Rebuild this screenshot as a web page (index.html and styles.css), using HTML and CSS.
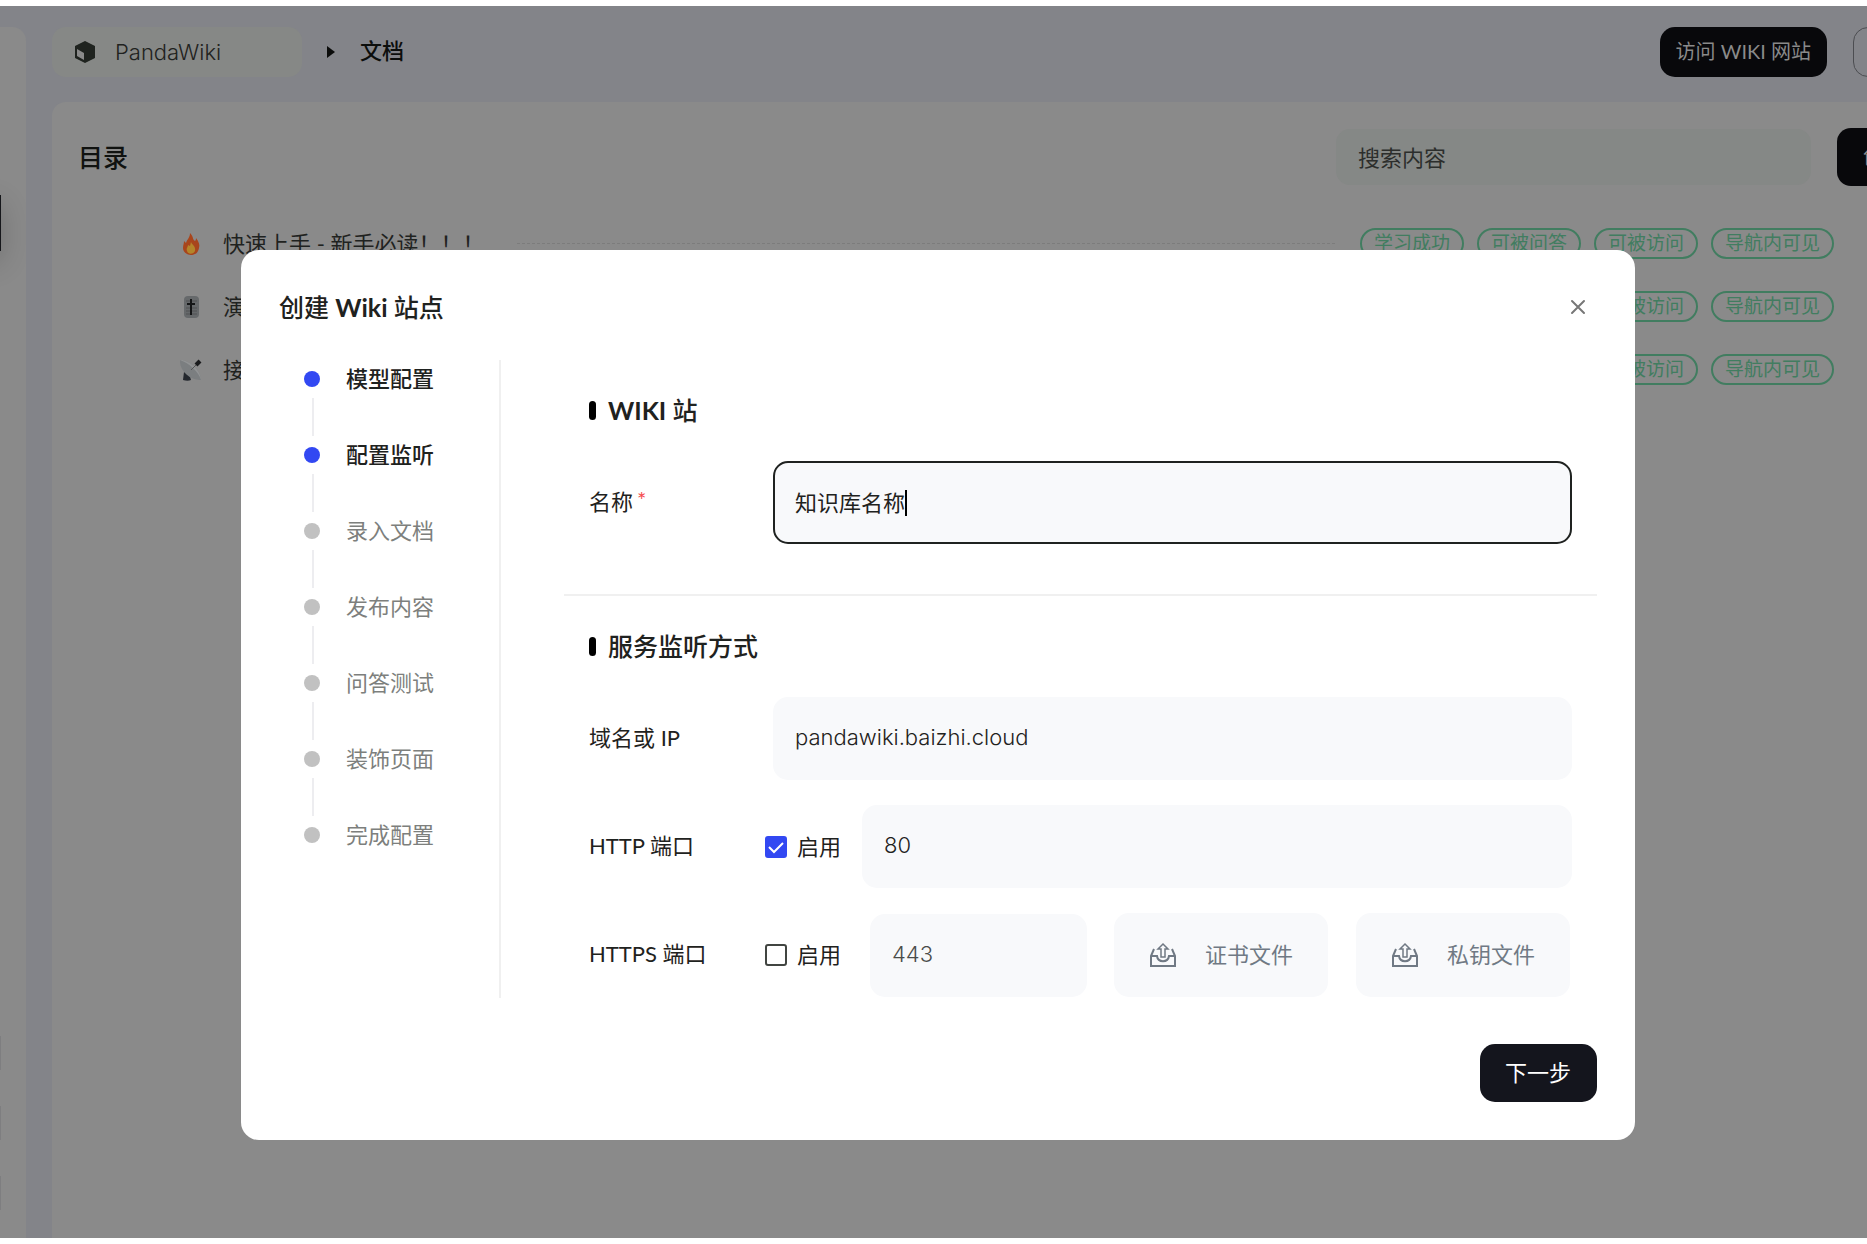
FILE: index.html
```html
<!DOCTYPE html>
<html lang="zh-CN">
<head>
  <meta charset="UTF-8" />
  <title>PandaWiki</title>
  <link rel="stylesheet" href="styles.css">
</head>
<body>
  <div class="app">
    <aside class="sidebar">
      <div class="nav-active"></div>
      <div class="nav-foot"></div>
      <div class="nav-foot"></div>
      <div class="nav-foot"></div>
    </aside>
    <div class="content">
      <header class="topbar">
        <button class="kb-select">
          <svg width="20" height="22" viewBox="0 0 20 22"><path d="M10 0 20 5v12l-10 5L0 17V5z" fill="#1f231f"/><path d="M2 8l7 4v7L2 15z" fill="#8a8a8a"/></svg>
          <span>PandaWiki</span>
        </button>
        <svg class="caret" width="8" height="12" viewBox="0 0 8 12"><path d="M0 0l8 6-8 6z" fill="#0b0c0b"/></svg>
        <strong class="crumb">文档</strong>
        <button class="btn-visit">访问 WIKI 网站</button>
        <button class="btn-outline" aria-label="更多"></button>
      </header>
      <main class="panel">
        <div class="panel-head">
          <h2>目录</h2>
          <input class="search" type="text" placeholder="搜索内容" aria-label="搜索内容">
          <button class="btn-create">创建文档</button>
        </div>
        <ul class="docs">
          <li class="doc">
            <svg class="doc-icon" width="22" height="22" viewBox="0 0 22 22"><path d="M10 0c4 4 2 6 5 8 1-1 1-2 1-3 3 4 4 7 3 10-1 5-4 7-8 7s-8-3-8-7c0-3 1-4 1-7l2 2c1-4 4-5 4-10z" fill="#a8451c"/><path d="M11 9c1 3 5 4 4 9-1 3-7 4-8 0-1-3 1-4 1-6l2 1z" fill="#b3852a"/></svg>
            <span>快速上手 - 新手必读！！！</span>
            <i class="dashes"></i>
            <span class="tag">学习成功</span><span class="tag">可被问答</span><span class="tag">可被访问</span><span class="tag">导航内可见</span>
          </li>
          <li class="doc">
            <svg class="doc-icon" width="22" height="22" viewBox="0 0 22 22"><rect x="4" width="15" height="22" rx="4" fill="#66696b"/><path d="M6 5h11M6 12h11M6 15h11M6 18h11" stroke="#505355"/><path d="M11 3v16M7 8h8" stroke="#151617" stroke-width="2"/></svg>
            <span>演示文档</span>
            <i class="dashes"></i>
            <span class="tag">学习成功</span><span class="tag">可被问答</span><span class="tag">可被访问</span><span class="tag">导航内可见</span>
          </li>
          <li class="doc">
            <svg class="doc-icon" width="22" height="22" viewBox="0 0 22 22"><path d="M4 13l-1 8c3 1 6 1 8 0l-2-7z" fill="#24282e"/><path d="M0 1c7-1 21 9 21 20C11 22-1 12 0 1z" fill="#7b7e80"/><path d="M0 1c7-1 21 9 21 20C19 13 9 4 0 1z" fill="#919394"/><path d="M11 11l6-6" stroke="#555" stroke-width="1"/><path d="M16 6l4-4" stroke="#1a1b1d" stroke-width="4"/></svg>
            <span>接入说明</span>
            <i class="dashes"></i>
            <span class="tag">学习成功</span><span class="tag">可被问答</span><span class="tag">可被访问</span><span class="tag">导航内可见</span>
          </li>
        </ul>
      </main>
    </div>

    <div class="overlay">
      <div class="modal" role="dialog" aria-labelledby="modal-title">
        <div class="modal-head">
          <h2 id="modal-title">创建 <b>Wiki</b> 站点</h2>
          <button class="close" aria-label="关闭">
            <svg width="16" height="16" viewBox="0 0 16 16"><path d="M2 2l12 12M14 2L2 14" stroke="#777" stroke-width="2" stroke-linecap="round"/></svg>
          </button>
        </div>
        <div class="modal-body">
          <ol class="steps">
            <li class="done">模型配置</li>
            <li class="done">配置监听</li>
            <li>录入文档</li>
            <li>发布内容</li>
            <li>问答测试</li>
            <li>装饰页面</li>
            <li>完成配置</li>
          </ol>
          <form class="form" id="wiki-form">
            <section class="section">
              <h3><span><b>WIKI</b> 站</span></h3>
              <div class="row">
                <label class="name" for="name">名称<sup>*</sup></label>
                <div class="field focused">
                  <input type="text" id="name" value="知识库名称">
                  <span class="cursor"></span>
                </div>
              </div>
            </section>
            <section class="section">
              <h3>服务监听方式</h3>
              <div class="row">
                <label class="name" for="host">域名或 IP</label>
                <div class="field"><input type="text" id="host" value="pandawiki.baizhi.cloud"></div>
              </div>
              <div class="row">
                <label class="name" for="http">HTTP 端口</label>
                <label class="check"><input type="checkbox" checked>启用</label>
                <div class="field"><input type="text" id="http" value="80"></div>
              </div>
              <div class="row row-https">
                <label class="name" for="https">HTTPS 端口</label>
                <label class="check"><input type="checkbox">启用</label>
                <div class="field"><input type="text" id="https" placeholder="443"></div>
                <button type="button" class="upload">
                  <svg width="28" height="26" viewBox="0 0 28 26"><path d="M5 7L2 14v10h24V14l-3-7M2 14h6c1 7 11 7 12 0h6" fill="none" stroke="currentColor" stroke-width="2"/><path d="M14 2l5 5h-3v8h-4V7H9z" fill="none" stroke="currentColor" stroke-width="1.500"/></svg>
                  证书文件
                </button>
                <button type="button" class="upload">
                  <svg width="28" height="26" viewBox="0 0 28 26"><path d="M5 7L2 14v10h24V14l-3-7M2 14h6c1 7 11 7 12 0h6" fill="none" stroke="currentColor" stroke-width="2"/><path d="M14 2l5 5h-3v8h-4V7H9z" fill="none" stroke="currentColor" stroke-width="1.500"/></svg>
                  私钥文件
                </button>
              </div>
            </section>
          </form>
        </div>
        <div class="modal-foot">
          <button class="btn-next" form="wiki-form">下一步</button>
        </div>
      </div>
    </div>
  </div>
</body>
</html>
```
FILE: styles.css
```css
* {
  box-sizing: border-box;
}

body {
  margin: 0;
  padding: 6px 0;
  height: 100vh;
  background: #fff;
  color: #1f2220;
  font: 400 22px/32px Lato, "Noto Sans CJK SC", sans-serif;
  overflow: hidden;
}

h2, h3, ul, ol {
  margin: 0;
  padding: 0;
  list-style: none;
}

button, input {
  font: inherit;
  color: inherit;
}

button {
  border: none;
  padding-bottom: 2px;
  cursor: pointer;
}

/* page behind the dialog */
.app {
  position: relative;
  display: flex;
  gap: 26px;
  height: 100%;
  padding-top: 21px;
  background: #838489;
  overflow: hidden;
}

.sidebar {
  width: 26px;
  display: flex;
  flex-direction: column;
  gap: 36px;
  padding-bottom: 28px;
  background: #8a8a8a;
  border-radius: 0 14px 0 0;
  overflow: hidden;
}

.nav-active {
  width: 40px;
  height: 56px;
  margin: 168px 0 auto -39px;
  background: #16171b;
  box-shadow: 0 10px 30px rgba(0, 0, 0, 0.2);
}

.nav-foot {
  width: 1px;
  height: 34px;
  background: #7e7e80;
}

.content {
  flex: 1;
  min-width: 0;
  display: flex;
  flex-direction: column;
  gap: 25px;
}

.topbar {
  display: flex;
  align-items: center;
  height: 50px;
}

.kb-select {
  display: flex;
  align-items: center;
  gap: 20px;
  width: 250px;
  height: 50px;
  padding: 0 23px;
  border-radius: 14px;
  background: #868886;
  font-family: Inter, "Noto Sans CJK SC", sans-serif;
  font-weight: 300;
}

.caret {
  margin: 0 25px;
}

.crumb {
  padding-bottom: 2px;
  font-weight: 500;
  color: #0c0e0c;
}

.btn-visit {
  height: 50px;
  margin-left: auto;
  padding: 0 16px 2px;
  border-radius: 15px;
  background: #08080b;
  color: #8a8a8a;
  font-size: 20px;
}

.btn-outline {
  width: 60px;
  height: 50px;
  margin: 0 -46px 0 26px;
  border: 1px solid #4c4d51;
  border-radius: 15px;
  background: none;
}

.panel {
  flex: 1;
  padding: 26px 0 0 26px;
  border-radius: 14px 0 0 0;
  background: #8a8a8a;
}

.panel-head {
  display: flex;
  align-items: center;
  gap: 26px;
}

.panel-head h2 {
  flex: 1;
  font-size: 25px;
  font-weight: 500;
  color: #101210;
}

.search {
  width: 475px;
  height: 56px;
  padding: 0 22px;
  border: none;
  border-radius: 14px;
  background: #858886;
}

.search::placeholder {
  color: #2c2e2c;
  opacity: 1;
}

.btn-create {
  width: 130px;
  height: 58px;
  margin-right: -100px;
  padding: 0 0 2px 26px;
  border-radius: 14px;
  background: #08080b;
  color: #8a8a8a;
  text-align: left;
  white-space: nowrap;
}

.docs {
  display: grid;
  gap: 32px;
  padding: 42px 33px 0 102px;
}

.doc {
  display: flex;
  align-items: center;
  gap: 13px;
  height: 31px;
  white-space: nowrap;
}

.doc-icon {
  margin-right: 8px;
}

.dashes {
  flex: 1;
  margin: 0 12px 0 20px;
  border-top: 1px dashed #7c7c7c;
}

.tag {
  height: 31px;
  padding: 0 12px;
  border: 2px solid #417d60;
  border-radius: 16px;
  color: #417d60;
  font-size: 19px;
  line-height: 26px;
}

/* dialog */
.overlay {
  position: absolute;
  inset: 0;
  padding: 244px 232px 0 241px;
}

.modal {
  padding: 39px 38px 38px;
  border-radius: 18px;
  background: #fff;
}

.modal-head {
  display: flex;
  align-items: center;
  justify-content: space-between;
  height: 36px;
}

.modal-head h2,
.section h3 {
  font-size: 25px;
  font-weight: 500;
}

.close {
  width: 38px;
  height: 36px;
  padding: 10px 11px;
  background: none;
  line-height: 0;
}

.modal-body {
  display: flex;
  margin-top: 35px;
}

.steps {
  width: 222px;
  padding: 3px 0 0 25px;
  border-right: 2px solid #f0f0f0;
}

.steps li {
  position: relative;
  display: flex;
  align-items: center;
  gap: 26px;
  height: 32px;
  margin-bottom: 44px;
  color: #7d7f7d;
}

.steps li::before {
  content: "";
  width: 16px;
  height: 16px;
  border-radius: 50%;
  background: #c1c1c1;
}

/* connector to the next step */
.steps li:not(:last-child)::after {
  content: "";
  position: absolute;
  left: 8px;
  top: 35px;
  width: 2px;
  height: 38px;
  background: #ededf0;
}

.steps .done {
  color: #1f2220;
  font-weight: 500;
}

.steps .done::before {
  background: #3248f2;
}

.form {
  flex: 1;
  min-width: 0;
  padding: 15px 0 1px 63px;
}

.section {
  padding: 17px 25px 0;
}

.section + .section {
  margin-top: 50px;
  padding-top: 32px;
  border-top: 2px solid #f0f0f0;
}

.section h3 {
  display: flex;
  align-items: center;
  gap: 12px;
  height: 36px;
  margin-bottom: 33px;
}

.section h3::before {
  content: "";
  width: 7px;
  height: 19px;
  border-radius: 4px;
  background: #000;
}

.row {
  display: flex;
  align-items: center;
  margin-bottom: 25px;
}

.section .row:last-child {
  margin-bottom: 0;
}

.name {
  width: 184px;
  padding-bottom: 2px;
}

.name sup {
  margin-left: 4px;
  color: #f5484d;
  font-size: 22px;
  line-height: 0;
  vertical-align: 2px;
}

.field {
  flex: 1;
  min-width: 0;
  display: flex;
  align-items: center;
  height: 83px;
  padding: 0 20px;
  border: 2px solid #f8f9fb;
  border-radius: 15px;
  background: #f8f9fb;
}

.field input {
  width: 100%;
  height: 100%;
  padding: 0 0 3px;
  border: none;
  outline: none;
  background: none;
  font-family: Inter, "Noto Sans CJK SC", sans-serif;
  font-weight: 300;
}

.field input::placeholder {
  color: #4a4c4a;
  opacity: 1;
}

.focused {
  border-color: #1f2220;
}

.focused input {
  width: 5em;
  font-weight: 400;
}

.cursor {
  width: 2px;
  height: 26px;
  background: #000;
}

.check {
  display: flex;
  align-items: center;
  gap: 10px;
  width: 97px;
  margin-left: -8px;
  white-space: nowrap;
}

.check input {
  appearance: none;
  width: 22px;
  height: 22px;
  margin: 0;
  border: 2px solid #414541;
  border-radius: 3px;
}

.check input:checked {
  border-color: #3248f2;
  background: #3248f2 url("data:image/svg+xml,%3Csvg xmlns='http://www.w3.org/2000/svg' viewBox='0 0 18 18'%3E%3Cpath d='M2 9l5 5 9-9' fill='none' stroke='white' stroke-width='2'/%3E%3C/svg%3E");
}

.row-https {
  padding-right: 2px;
}

.row-https .field {
  margin: 0 27px 0 8px;
}

.upload {
  display: flex;
  align-items: center;
  justify-content: center;
  gap: 28px;
  width: 214px;
  height: 84px;
  border-radius: 15px;
  background: #f8f9fb;
  color: #707984;
}

.upload + .upload {
  margin-left: 28px;
}

.modal-foot {
  display: flex;
  justify-content: flex-end;
  margin-top: 46px;
}

.btn-next {
  height: 58px;
  padding: 0 26px 1px 25px;
  border-radius: 15px;
  background: #14151d;
  color: #fff;
}
```
